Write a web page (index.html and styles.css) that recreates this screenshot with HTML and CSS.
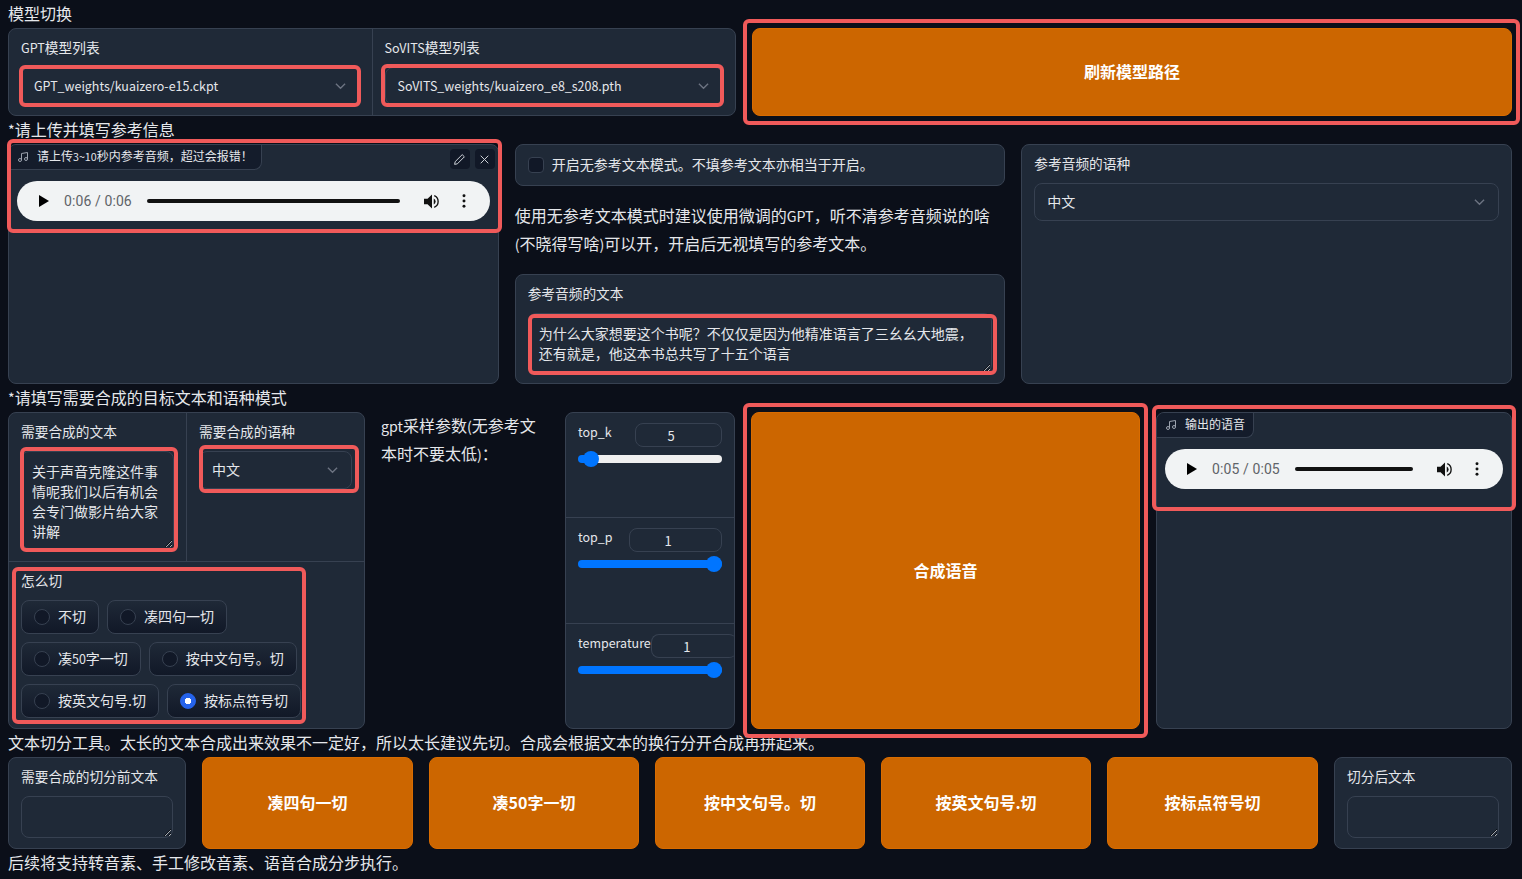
FILE: index.html
```html
<!DOCTYPE html>
<html lang="zh">
  <head>
    <meta charset="UTF-8" />
    <meta name="viewport" content="width=device-width, initial-scale=1.0" />
    <title>GPT-SoVITS WebUI</title>
    <link rel="stylesheet" href="styles.css">
  </head>
  <body>
    <p class="note">模型切换</p>
    <div class="row row-models">
      <div class="group group-split">
        <div class="cell">
          <div class="label"><span class="lat">GPT</span>模型列表</div>
          <div class="select"><span class="lat">GPT_weights/kuaizero-e15.ckpt</span><svg class="chevron" viewBox="0 0 12 8"><path d="M1 1.5l5 5 5-5"/></svg></div>
        </div>
        <div class="cell">
          <div class="label"><span class="lat">SoVITS</span>模型列表</div>
          <div class="select"><span class="lat">SoVITS_weights/kuaizero_e8_s208.pth</span><svg class="chevron" viewBox="0 0 12 8"><path d="M1 1.5l5 5 5-5"/></svg></div>
        </div>
      </div>
      <button class="primary">刷新模型路径</button>
    </div>

    <p class="note"><span class="lat">*</span>请上传并填写参考信息</p>
    <div class="row row-reference">
      <div class="group audio-block">
        <div class="tab">
          <svg class="note-icon" viewBox="0 0 24 24"><path d="M9 18V5l12-2v13"/><circle cx="6" cy="18" r="3"/><circle cx="18" cy="16" r="3"/></svg>
          <span>请上传<span class="lat">3~10</span>秒内参考音频，超过会报错！</span>
        </div>
        <div class="audio-tools">
          <span class="tool"><svg viewBox="0 0 24 24"><path d="M17 3l4 4L8 20l-5 1 1-5z"/></svg></span>
          <span class="tool"><svg viewBox="0 0 24 24"><path d="M5 5l14 14M19 5L5 19"/></svg></span>
        </div>
        <div class="player">
          <svg class="play" viewBox="0 0 10 12"><path d="M0 0l10 6-10 6z"/></svg>
          <span class="time">0:06 / 0:06</span>
          <span class="progress"></span>
          <svg class="volume" viewBox="0 0 18 16"><path d="M0 5h4l5-5v16l-5-5H0z"/><path d="M11 4.5a4 4 0 0 1 0 7z"/><path class="wave" d="M11.500 1.500a7 7 0 0 1 0 13"/></svg>
          <svg class="dots" viewBox="0 0 4 16"><circle cx="2" cy="2" r="1.700"/><circle cx="2" cy="8" r="1.700"/><circle cx="2" cy="14" r="1.700"/></svg>
        </div>
      </div>

      <div class="stack">
        <div class="group check-block">
          <span class="checkbox"></span>
          <span class="check-text">开启无参考文本模式。不填参考文本亦相当于开启。</span>
        </div>
        <p class="note">使用无参考文本模式时建议使用微调的<span class="lat">GPT</span>，听不清参考音频说的啥<br><span class="lat">(</span>不晓得写啥<span class="lat">)</span>可以开，开启后无视填写的参考文本。</p>
        <div class="group field">
          <div class="label">参考音频的文本</div>
          <textarea class="text text-ref" readonly>为什么大家想要这个书呢？不仅仅是因为他精准语言了三幺幺大地震，
还有就是，他这本书总共写了十五个语言</textarea>
        </div>
      </div>

      <div class="group field">
        <div class="label">参考音频的语种</div>
        <div class="select"><span>中文</span><svg class="chevron" viewBox="0 0 12 8"><path d="M1 1.5l5 5 5-5"/></svg></div>
      </div>
    </div>

    <p class="note"><span class="lat">*</span>请填写需要合成的目标文本和语种模式</p>
    <div class="row row-synth">
      <div class="group group-stack">
        <div class="group-split split-top">
          <div class="cell">
            <div class="label">需要合成的文本</div>
            <textarea class="text text-target" readonly>关于声音克隆这件事情呢我们以后有机会会专门做影片给大家讲解</textarea>
          </div>
          <div class="cell">
            <div class="label">需要合成的语种</div>
            <div class="select"><span>中文</span><svg class="chevron" viewBox="0 0 12 8"><path d="M1 1.5l5 5 5-5"/></svg></div>
          </div>
        </div>
        <div class="cut">
          <div class="label">怎么切</div>
          <div class="radios">
            <label class="radio"><i></i><span>不切</span></label>
            <label class="radio"><i></i><span>凑四句一切</span></label>
            <label class="radio"><i></i><span>凑<span class="lat">50</span>字一切</span></label>
            <label class="radio"><i></i><span>按中文句号。切</span></label>
            <label class="radio"><i></i><span>按英文句号.切</span></label>
            <label class="radio checked"><i></i><span>按标点符号切</span></label>
          </div>
        </div>
      </div>

      <p class="note"><span class="lat">gpt</span>采样参数<span class="lat">(</span>无参考文<br>本时不要太低<span class="lat">)</span>：</p>

      <div class="group sliders">
        <div class="slider">
          <div class="slider-head"><span class="lat">top_k</span><span class="num num-k">5</span></div>
          <input type="range" min="1" max="100" value="5" style="--fill: 8%">
        </div>
        <div class="slider">
          <div class="slider-head"><span class="lat">top_p</span><span class="num num-p">1</span></div>
          <input type="range" min="0" max="1" step="0.05" value="1" style="--fill: 100%">
        </div>
        <div class="slider">
          <div class="slider-head"><span class="lat">temperature</span><span class="num num-t">1</span></div>
          <input type="range" min="0" max="1" step="0.05" value="1" style="--fill: 100%">
        </div>
      </div>

      <button class="primary">合成语音</button>

      <div class="group audio-block">
        <div class="tab">
          <svg class="note-icon" viewBox="0 0 24 24"><path d="M9 18V5l12-2v13"/><circle cx="6" cy="18" r="3"/><circle cx="18" cy="16" r="3"/></svg>
          <span>输出的语音</span>
        </div>
        <div class="player">
          <svg class="play" viewBox="0 0 10 12"><path d="M0 0l10 6-10 6z"/></svg>
          <span class="time">0:05 / 0:05</span>
          <span class="progress"></span>
          <svg class="volume" viewBox="0 0 18 16"><path d="M0 5h4l5-5v16l-5-5H0z"/><path d="M11 4.5a4 4 0 0 1 0 7z"/><path class="wave" d="M11.500 1.500a7 7 0 0 1 0 13"/></svg>
          <svg class="dots" viewBox="0 0 4 16"><circle cx="2" cy="2" r="1.700"/><circle cx="2" cy="8" r="1.700"/><circle cx="2" cy="14" r="1.700"/></svg>
        </div>
      </div>
    </div>

    <p class="note">文本切分工具。太长的文本合成出来效果不一定好，所以太长建议先切。合成会根据文本的换行分开合成再拼起来。</p>
    <div class="row row-split">
      <div class="group field">
        <div class="label">需要合成的切分前文本</div>
        <textarea class="text text-small" readonly></textarea>
      </div>
      <button class="primary">凑四句一切</button>
      <button class="primary">凑50字一切</button>
      <button class="primary">按中文句号。切</button>
      <button class="primary">按英文句号.切</button>
      <button class="primary">按标点符号切</button>
      <div class="group field">
        <div class="label">切分后文本</div>
        <textarea class="text text-small" readonly></textarea>
      </div>
    </div>
    <p class="note">后续将支持转音素、手工修改音素、语音合成分步执行。</p>

    <!-- red annotation boxes drawn on top of the screenshot -->
    <div class="mark mark-gpt"></div>
    <div class="mark mark-sovits"></div>
    <div class="mark mark-refresh"></div>
    <div class="mark mark-refaudio"></div>
    <div class="mark mark-reftext"></div>
    <div class="mark mark-target"></div>
    <div class="mark mark-lang"></div>
    <div class="mark mark-cut"></div>
    <div class="mark mark-synth"></div>
    <div class="mark mark-output"></div>
  </body>
</html>
```

FILE: styles.css
```css
* {
  box-sizing: border-box;
}

body {
  position: relative;
  margin: 0;
  padding: 0 10px 0 8px;
  min-height: 879px;
  background: #0b0f19;
  color: #e5e7eb;
  font-family: "Noto Sans CJK SC", "Noto Sans", sans-serif;
  font-size: 14px;
  overflow: hidden;
}

/* latin runs set a bit smaller, the CJK font's latin is wide */
.lat {
  font-size: 0.89em;
  line-height: 0;
}

.note {
  margin: -1px 0 1px;
  font-size: 16px;
  line-height: 28px;
}

.row {
  display: grid;
  gap: 16px;
}

.row-models {
  grid-template-columns: 728px 760px;
}

.row-reference {
  grid-template-columns: repeat(3, minmax(0, 1fr));
}

.row-synth {
  grid-template-columns: 357px 168px 170px 389px 356px;
}

.row-split {
  grid-template-columns: 178px 211px 210px 210px 210px 211px 178px;
}

.group {
  background: #1f2937;
  border: 1px solid #374151;
  border-radius: 8px;
  overflow: hidden;
}

.group-split {
  display: flex;
}

.cell {
  flex: 1;
  min-width: 0;
  padding: 8px 12px 10px;
}

.cell + .cell {
  border-left: 1px solid #374151;
}

.field {
  padding: 8px 12px 10px;
}

.label {
  margin-bottom: 10px;
  font-size: 13.700px;
  line-height: 20px;
}

.label .lat {
  font-size: 0.92em;
}

.select {
  display: flex;
  align-items: center;
  justify-content: space-between;
  height: 38px;
  padding: 0 13px 2px 12px;
  border: 1px solid #374151;
  border-radius: 8px;
  background: #1f2937;
}

.select .lat {
  margin-top: 2px;
}

.chevron {
  width: 11px;
  height: 8px;
  margin-top: 2px;
  fill: none;
  stroke: #6b7280;
  stroke-width: 1.500;
}

.primary {
  padding: 0 0 2px;
  border: 1px solid #d96c00;
  border-radius: 8px;
  background: #cc6600;
  color: #fff;
  font-family: inherit;
  font-size: 16px;
  font-weight: 700;
}

/* audio */
.audio-block {
  position: relative;
}

.tab {
  display: inline-flex;
  align-items: center;
  height: 25px;
  padding: 0 8px 3px 8px;
  background: #141c2b;
  border-right: 1px solid #374151;
  border-bottom: 1px solid #374151;
  border-bottom-right-radius: 8px;
  font-size: 12px;
  vertical-align: top;
}

.note-icon {
  width: 12px;
  height: 12px;
  margin: 3px 8px 0 0;
  fill: none;
  stroke: #9ca3af;
  stroke-width: 2;
}

.audio-tools {
  position: absolute;
  top: 4px;
  right: 3px;
  display: flex;
  gap: 5px;
}

.tool {
  display: flex;
  align-items: center;
  justify-content: center;
  width: 20px;
  height: 20px;
  border-radius: 4px;
  background: #111827;
}

.tool svg {
  width: 13px;
  height: 13px;
  fill: none;
  stroke: #d1d5db;
  stroke-width: 1.800;
}

.player {
  display: flex;
  align-items: center;
  height: 40px;
  margin: 11px 8px 0;
  padding: 0 24px 0 22px;
  border-radius: 20px;
  background: #f1f3f4;
  font-family: Roboto, "Liberation Sans", sans-serif;
  color: #5f6368;
}

.play {
  flex: none;
  width: 10px;
  height: 12px;
  fill: #000;
}

.time {
  margin: 0 15px;
  font-size: 14px;
  letter-spacing: 0.1px;
  white-space: nowrap;
}

.progress {
  flex: 1;
  height: 4px;
  border-radius: 2px;
  background: #111;
}

.volume {
  flex: none;
  width: 16px;
  height: 15px;
  margin-left: 24px;
  fill: #111;
}

.volume .wave {
  fill: none;
  stroke: #111;
  stroke-width: 1.500;
}

.dots {
  flex: none;
  width: 4px;
  height: 14px;
  margin-left: 22px;
  fill: #111;
}

/* middle column */
.stack {
  display: flex;
  flex-direction: column;
  gap: 16px;
}

.stack .note {
  margin: 0;
  position: relative;
  top: -1px;
}

.check-block {
  display: flex;
  align-items: center;
  gap: 8px;
  height: 42px;
  padding: 0 12px;
}

.check-text {
  padding-bottom: 2px;
}

.checkbox {
  width: 16px;
  height: 16px;
  border: 1px solid #374151;
  border-radius: 4px;
  background: #111827;
}

.text {
  display: block;
  width: 100%;
  padding: 9px 10px 7px;
  border: 1px solid #374151;
  border-radius: 8px;
  background: #1f2937;
  color: #e5e7eb;
  color-scheme: dark;
  font-family: inherit;
  font-size: 14px;
  line-height: 20px;
  overflow: hidden;
  outline: none;
}

.text-ref {
  height: 60px;
}

.text-target {
  height: 98px;
}

.text-small {
  height: 42px;
}

/* left group of the synth row */
.split-top {
  border-bottom: 1px solid #374151;
}

.split-top .cell {
  padding-bottom: 12px;
}

.cut {
  padding: 8px 12px 10px;
}

.radios {
  display: flex;
  flex-wrap: wrap;
  gap: 8px;
}

.radio {
  display: flex;
  align-items: center;
  gap: 8px;
  height: 34px;
  padding: 0 12px;
  border: 1px solid #374151;
  border-radius: 8px;
  background: linear-gradient(to top, #111827, #1f2937);
  white-space: nowrap;
}

.radio span {
  padding-bottom: 3px;
}

.radio span span {
  padding: 0;
}

.radio i {
  width: 16px;
  height: 16px;
  border: 1px solid #374151;
  border-radius: 50%;
  background: #111827;
}

.radio.checked i {
  border-color: #2563eb;
  background: radial-gradient(circle, #fff 0 3px, #2563eb 3.500px);
}

/* sliders */
.sliders {
  display: grid;
  grid-template-rows: 104px 106px 1fr;
}

.slider {
  padding: 10px 12px;
  overflow: hidden;
}

.slider + .slider {
  border-top: 1px solid #374151;
}

.slider-head {
  display: flex;
  justify-content: space-between;
  align-items: flex-start;
  line-height: 20px;
}

.slider-head .lat {
  margin-top: -1px;
  line-height: 20px;
}

.num {
  height: 24px;
  padding-right: 15px;
  border: 1px solid #374151;
  border-radius: 8px;
  font-size: 13px;
  line-height: 24px;
  text-align: center;
}

.num-k {
  width: 87px;
}

.num-p {
  width: 93px;
}

.num-t {
  flex: none;
  width: 86px;
  margin-right: -13px;
  border-right: 0;
}

.slider input {
  display: block;
  width: 100%;
  height: 16px;
  margin: 4px 0 0;
  background: none;
  -webkit-appearance: none;
  appearance: none;
}

.slider input::-webkit-slider-runnable-track {
  height: 8px;
  border-radius: 4px;
  background: linear-gradient(to right, #0075ff var(--fill), #efefef var(--fill));
}

.slider input::-webkit-slider-thumb {
  width: 16px;
  height: 16px;
  margin-top: -4px;
  border-radius: 50%;
  background: #0075ff;
  -webkit-appearance: none;
  appearance: none;
}

/* annotation boxes */
.mark {
  position: absolute;
  border: 4px solid #f05a5a;
  border-radius: 6px;
  pointer-events: none;
}

.mark-gpt { left: 19px; top: 65px; width: 342px; height: 42px; }
.mark-sovits { left: 381px; top: 64px; width: 343px; height: 43px; }
.mark-refresh { left: 743px; top: 19px; width: 777px; height: 106px; }
.mark-refaudio { left: 7px; top: 139px; width: 495px; height: 94px; }
.mark-reftext { left: 528px; top: 314px; width: 469px; height: 61px; }
.mark-target { left: 20px; top: 447px; width: 158px; height: 105px; }
.mark-lang { left: 199px; top: 445px; width: 160px; height: 48px; }
.mark-cut { left: 12px; top: 567px; width: 294px; height: 157px; }
.mark-synth { left: 743px; top: 403px; width: 405px; height: 335px; }
.mark-output { left: 1152px; top: 405px; width: 364px; height: 106px; }
```
